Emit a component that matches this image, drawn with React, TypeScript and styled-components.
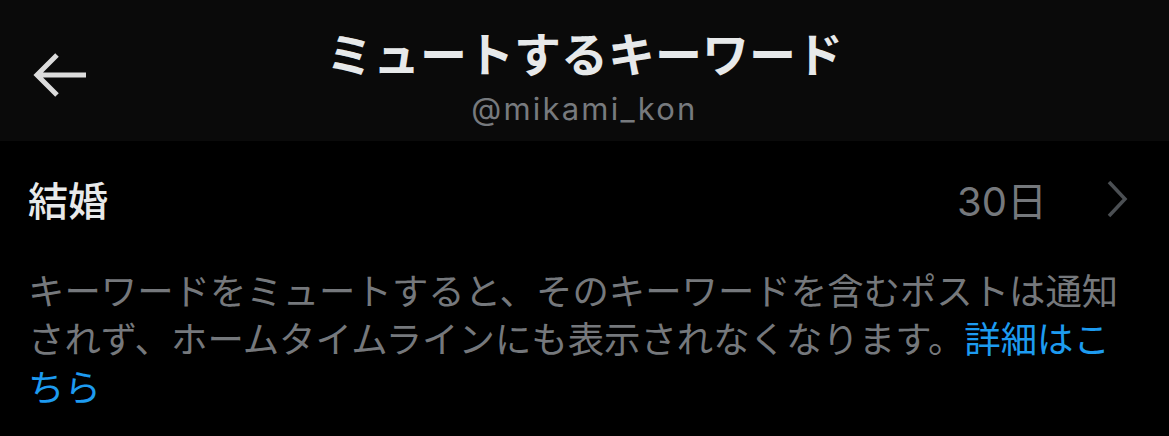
import { createGlobalStyle, styled } from 'styled-components';

const GlobalStyle = createGlobalStyle`
  html, body {
    margin: 0;
    padding: 0;
    background: #000;
  }
`;

const JP = `Inter, "Noto Sans CJK JP", sans-serif`;

const Page = styled.div`
  width: 1169px;
  height: 436px;
  background: #000;
  overflow: hidden;
  font-family: ${JP};
`;

const Header = styled.header`
  display: grid;
  grid-template-columns: 1fr auto 1fr;
  align-items: start;
  height: 141px;
  background: #0a0a0a;
`;

const BackButton = styled.button`
  justify-self: start;
  display: flex;
  align-items: center;
  margin: 52px 0 0 32px;
  padding: 0;
  border: none;
  background: none;
  color: #dcdcdc;
`;

const TitleBlock = styled.div`
  display: flex;
  flex-direction: column;
  align-items: center;
`;

const Title = styled.h1`
  margin: 21px 0 0;
  font-size: 47px;
  line-height: 62px;
  font-weight: 700;
  color: #e7e9ea;
  font-family: "Noto Sans CJK JP", sans-serif;
`;

const Handle = styled.span`
  margin-top: 6px;
  font-size: 31px;
  line-height: 40px;
  letter-spacing: 2.2px;
  color: #777a7e;
`;

const KeywordRow = styled.div`
  display: flex;
  align-items: center;
  height: 116px;
  padding: 0 41px 0 28px;
  box-sizing: border-box;
`;

const Keyword = styled.span`
  flex: 1;
  font-size: 40px;
  font-weight: 500;
  color: #e7e9ea;
  font-family: "Noto Sans CJK JP", sans-serif;
`;

const Duration = styled.span`
  font-size: 40px;
  color: #75787c;
  margin-right: 59px;
`;

const Chevron = styled.span`
  display: flex;
  color: #4b4f53;
`;

const Description = styled.p`
  margin: 0;
  width: 1100px;
  padding: 8px 0 0 28px;
  font-size: 36.4px;
  line-height: 48px;
  color: #75787c;
  font-family: "Noto Sans CJK JP", sans-serif;
`;

const Link = styled.a`
  color: #1d9bf0;
  text-decoration: none;
`;

const App = () => {
  return (
    <Page>
      <GlobalStyle />
      <Header>
        <BackButton aria-label="戻る">
          <svg width="56" height="46" viewBox="0 0 56 46" fill="none">
            <path
              d="M54 23H6M25 3L5 23l20 20"
              stroke="currentColor"
              strokeWidth="5"
            />
          </svg>
        </BackButton>
        <TitleBlock>
          <Title>ミュートするキーワード</Title>
          <Handle>@mikami_kon</Handle>
        </TitleBlock>
        <div />
      </Header>
      <KeywordRow>
        <Keyword>結婚</Keyword>
        <Duration>30日</Duration>
        <Chevron>
          <svg width="22" height="38" viewBox="0 0 22 38" fill="none">
            <path d="M3 2l16 17L3 36" stroke="currentColor" strokeWidth="3.5" />
          </svg>
        </Chevron>
      </KeywordRow>
      <Description>
        キーワードをミュートすると、そのキーワードを含むポストは通知されず、ホームタイムラインにも表示されなくなります。
        <Link href="#">詳細はこちら</Link>
      </Description>
    </Page>
  );
};

export default App;
